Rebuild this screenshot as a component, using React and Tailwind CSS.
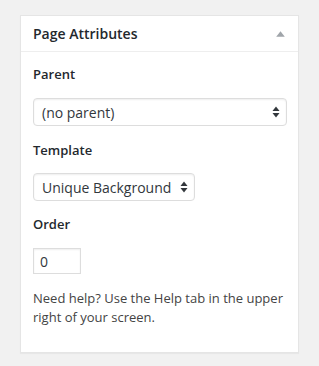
export default function App() {
  const font = { fontFamily: '"Open Sans", "Noto Sans", sans-serif' };
  const Arrows = () => (
    <svg width="8" height="12" viewBox="0 0 8 12" className="shrink-0">
      <path d="M4 0.5 L7.5 5 L0.5 5 Z" fill="#32373c" />
      <path d="M4 11.5 L7.5 7 L0.5 7 Z" fill="#32373c" />
    </svg>
  );
  return (
    <div className="w-[319px] h-[366px] bg-[#f1f1f1] pt-[15px] pl-[20px]" style={font}>
      <div className="w-[279px] h-[338px] bg-white border border-[#e5e5e5] shadow-[0_1px_1px_rgba(0,0,0,0.04)] flex flex-col">
        <div className="h-[36px] border-b border-[#eeeeee] flex items-center justify-between pl-[12px] pr-[13px]">
          <span className="text-[14px] font-semibold text-[#23282d] leading-[18px]">Page Attributes</span>
          <svg width="9" height="6" viewBox="0 0 9 6">
            <path d="M4.5 0.3 L8.8 5.7 L0.2 5.7 Z" fill="#a0a5aa" />
          </svg>
        </div>
        <div className="flex flex-col items-start px-[12px] pt-[13px] text-[#32373c]">
          <div className="text-[13px] font-semibold leading-[18px] text-[#23282d]">Parent</div>
          <div className="mt-[15px] w-[254px] h-[28px] border border-[#dddddd] rounded-[4px] shadow-[inset_0_1px_2px_rgba(0,0,0,0.07)] flex items-center justify-between pl-[8px] pr-[6px] text-[14px] text-[#32373c]">
            <span>(no parent)</span>
            <Arrows />
          </div>
          <div className="mt-[15px] text-[13px] font-semibold leading-[18px] text-[#23282d]">Template</div>
          <div className="mt-[14px] w-[162px] h-[28px] border border-[#dddddd] rounded-[4px] shadow-[inset_0_1px_2px_rgba(0,0,0,0.07)] flex items-center justify-between pl-[8px] pr-[6px] text-[14px] text-[#32373c]">
            <span>Unique Background</span>
            <Arrows />
          </div>
          <div className="mt-[14px] text-[13px] font-semibold leading-[18px] text-[#23282d]">Order</div>
          <div className="mt-[15px] w-[48px] h-[26px] border border-[#dddddd] shadow-[inset_0_1px_2px_rgba(0,0,0,0.07)] flex items-center pl-[6px] text-[14px] text-[#32373c]">
            0
          </div>
          <p className="mt-[15px] text-[13px] leading-[19px] text-[#444444]">
            Need help? Use the Help tab in the upper right of your screen.
          </p>
        </div>
      </div>
    </div>
  );
}
